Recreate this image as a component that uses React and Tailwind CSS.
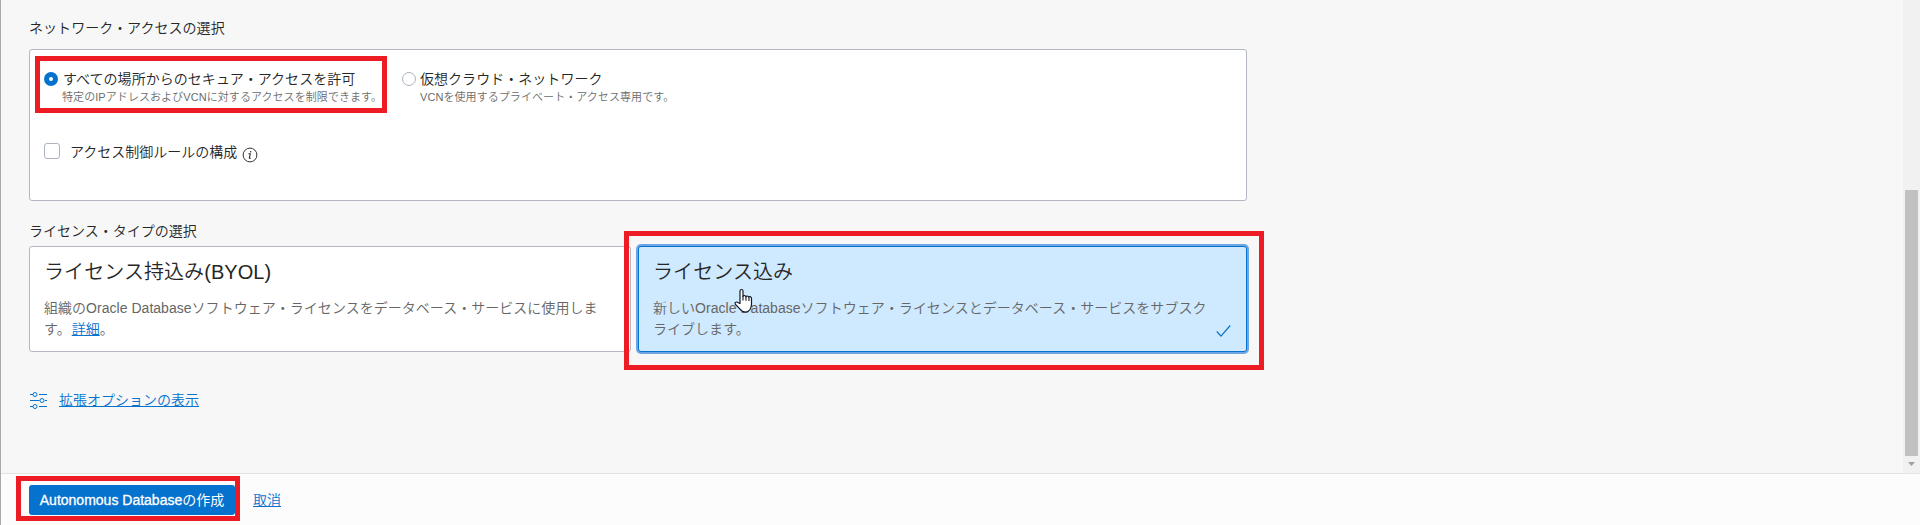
import React from 'react';

function Radio({ checked }) {
  return checked ? (
    <span className="flex size-[14px] shrink-0 items-center justify-center rounded-full bg-[#0572ce]">
      <span className="size-1 rounded-full bg-white" />
    </span>
  ) : (
    <span className="size-[14px] shrink-0 rounded-full border border-[#aeb4bd] bg-white" />
  );
}

function AccessOption({ checked, label, hint, gap, hintPad }) {
  return (
    <div>
      <div className={`flex h-[22px] items-center ${gap}`}>
        <Radio checked={checked} />
        <span className="text-[14px] leading-[22px] tracking-[0.04px]">{label}</span>
      </div>
      <p className={`text-[11px] leading-[14px] tracking-[0.07px] text-[#6b6b6b] ${hintPad}`}>{hint}</p>
    </div>
  );
}

function InfoIcon() {
  return (
    <svg className="mt-[7px] ml-[5px] size-4 shrink-0" viewBox="0 0 16 16" fill="none" stroke="#333">
      <circle cx="8" cy="8" r="6.9" strokeWidth="1" />
      <path d="M6.4 6.8h1.9l-1 4.3q0 .5 1.5-.2" strokeWidth="1.1" />
      <circle cx="8.6" cy="4.7" r=".75" fill="#333" stroke="none" />
    </svg>
  );
}

function SlidersIcon() {
  return (
    <svg className="mt-px h-[18px] w-[17px]" viewBox="0 0 17 18" fill="none" stroke="#0572ce" strokeWidth="1">
      <path d="M0 2.5h3M9 2.5h8M0 8.5h9.500M15 8.500h2M0 14.500h3M9 14.500h8" />
      <circle cx="5" cy="2.500" r="2" />
      <circle cx="12" cy="8.500" r="2" />
      <circle cx="5" cy="14.500" r="2" />
    </svg>
  );
}

function HandCursor() {
  return (
    <svg className="absolute left-[733px] top-[288px] h-[26px] w-[20px]" viewBox="0 0 20 26">
      <path
        d="M6 15.500V3q0-1.500 1.500-1.500T9 3v5.500q.2-1 1.400-1t1.500 1.300q.3-.8 1.400-.8t1.400 1.300q.3-.7 1.300-.7t1.500 1.500V16q0 3-1.500 5.500-1.800 2.500-4.500 2.500-3.500 0-5.500-2.800L1.500 16.500q-1-1.700.3-2.300 1.200-.6 2.500.5z"
        fill="#fff"
        stroke="#111827"
        strokeWidth="1.2"
        strokeLinejoin="round"
      />
      <path d="M9 8v4.500M12 8.800v4M15 9.500v3.500" stroke="#111827" strokeWidth="1.100" />
    </svg>
  );
}

export default function App() {
  return (
    <div className="relative flex h-[525px] w-[1920px] flex-col overflow-hidden whitespace-nowrap border-l border-[#a9a9a9] bg-[#f7f7f7] font-['Liberation_Sans','Noto_Sans_CJK_JP',sans-serif] text-[14px] font-[350] text-[#262626]">
      <div className="flex h-[473px] justify-between">
        <main className="ml-7 w-[1218px] pt-[17px]">
          <h2 className="h-8 leading-[22px] tracking-[0.05px]">ネットワーク・アクセスの選択</h2>
          <section className="h-[152px] rounded-[3px] border border-[#b3b8c1] bg-white pl-[14px] pt-[18px]">
            <div className="flex">
              <div className="w-[358px]">
                <AccessOption
                  checked
                  label="すべての場所からのセキュア・アクセスを許可"
                  hint="特定のIPアドレスおよびVCNに対するアクセスを制限できます。"
                  gap="gap-[5px]"
                  hintPad="pl-[18px]"
                />
              </div>
              <AccessOption
                label="仮想クラウド・ネットワーク"
                hint="VCNを使用するプライベート・アクセス専用です。"
                gap="gap-[4px]"
                hintPad="pl-[18px]"
              />
            </div>
            <div className="mt-[36px] flex h-[22px] items-center">
              <span className="size-4 rounded-[3px] border border-[#aeb4bd] bg-white" />
              <span className="ml-[10px] mt-px leading-[22px]">アクセス制御ルールの構成</span>
              <InfoIcon />
            </div>
          </section>

          <h2 className="mt-[19px] h-[26px] leading-[22px]">ライセンス・タイプの選択</h2>
          <div className="flex h-[106px] gap-[7px]">
            <section className="w-[602px] rounded-[3px] border border-[#b3b8c1] bg-white pl-[14px] pt-[10px]">
              <h3 className="h-[41px] text-[20px] font-[350] leading-[30px] tracking-[0.07px]">ライセンス持込み(BYOL)</h3>
              <p className="leading-[21px] tracking-[0.03px] text-[#666]">
                組織のOracle Databaseソフトウェア・ライセンスをデータベース・サービスに使用しま
                <br />
                す。
                <a className="ml-px text-[#0572ce] underline">詳細</a>。
              </p>
            </section>
            <section className="flex w-[609px] justify-between rounded-[3px] border border-[#0572ce] bg-[#cfe9ff] pl-[14px] pr-[15px] pt-[10px] shadow-[0_0_0_2px_#6ea6e3]">
              <div>
                <h3 className="h-[41px] text-[20px] font-[350] leading-[30px] tracking-[0.07px]">ライセンス込み</h3>
                <p className="leading-[21px] tracking-[0.03px] text-[#666]">
                  新しいOracle Databaseソフトウェア・ライセンスとデータベース・サービスをサブスク
                  <br />
                  ライブします。
                </p>
              </div>
              <svg className="mt-[67px] h-[14px] w-[15px]" viewBox="0 0 15 14" fill="none" stroke="#0572ce" strokeWidth="1.200">
                <path d="M.8 7.500 5 12.200 14.200 1.500" />
              </svg>
            </section>
          </div>

          <div className="ml-px mt-[37px] flex h-[22px] items-center">
            <SlidersIcon />
            <a className="ml-[12px] leading-[22px] text-[#0572ce] underline">拡張オプションの表示</a>
          </div>
        </main>

        <div className="flex w-[17px] flex-col items-center bg-[#f1f1f1] pt-[190px]">
          <div className="h-[266px] w-[13px] bg-[#c1c1c1]" />
          <svg className="mt-[6px] h-1 w-[7px]" viewBox="0 0 7 4">
            <path d="M0 0h7L3.500 4z" fill="#a0a0a0" />
          </svg>
        </div>
      </div>

      <footer className="flex h-[52px] items-start border-t border-[#e3e3e3] bg-[#fcfcfc] pl-7 pt-[11px]">
        <button className="h-[30px] w-[206px] rounded-[3px] bg-[#0572ce] text-[14px] font-normal leading-[30px] text-white">
          <span className="[-webkit-text-stroke:0.3px_white]">Autonomous Database</span>の作成
        </button>
        <a className="ml-[18px] leading-[30px] text-[#0572ce] underline">取消</a>
      </footer>

      <div className="absolute left-[34px] top-[56px] h-[57px] w-[352px] border-5 border-[#ed1c24]" />
      <div className="absolute left-[623px] top-[231px] h-[139px] w-[640px] border-5 border-[#ed1c24]" />
      <div className="absolute left-[15px] top-[476px] h-[45px] w-[224px] border-5 border-[#ed1c24]" />
      <HandCursor />
    </div>
  );
}
